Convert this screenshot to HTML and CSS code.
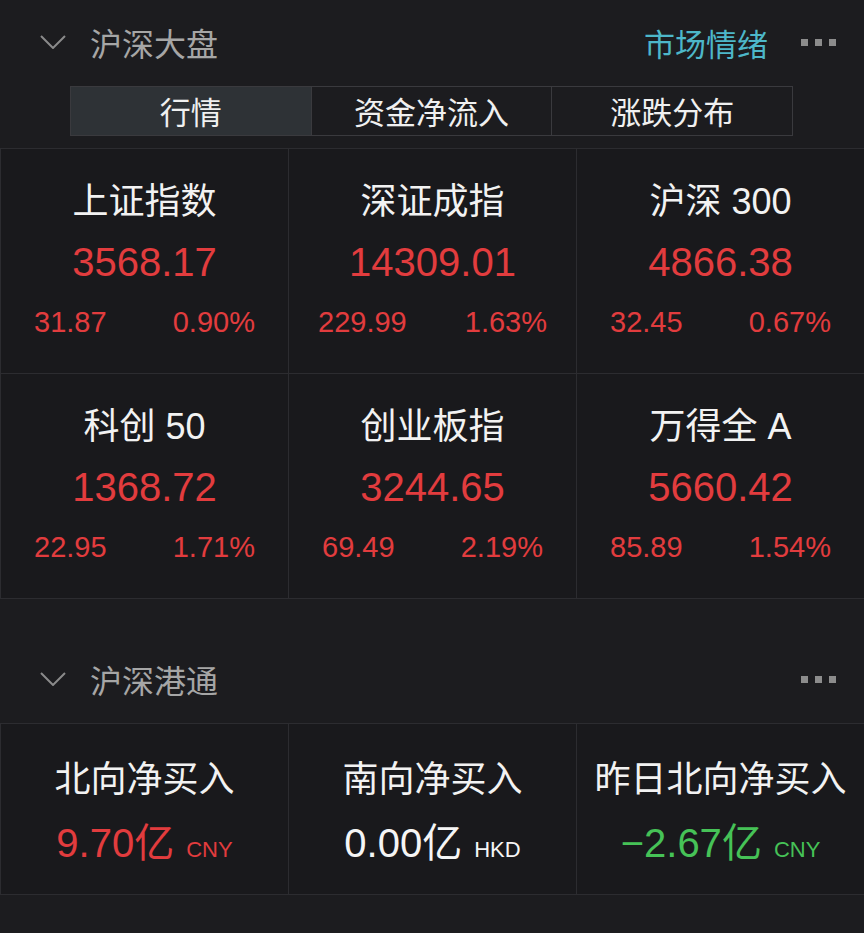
FILE: index.html
```html
<!DOCTYPE html>
<html lang="zh-CN">
<head>
  <meta charset="UTF-8" />
  <meta name="viewport" content="width=device-width, initial-scale=1.0"/>
  <title>沪深大盘</title>
  <link rel="stylesheet" href="styles.css">
</head>
<body>
  <!-- 沪深大盘 -->
  <div class="section-head first">
    <svg class="chevron" width="26" height="14" viewBox="0 0 26 14"><path d="M1 1 L13 13 L25 1" fill="none" stroke="#8a8a8a" stroke-width="2"/></svg>
    <span class="section-title">沪深大盘</span>
    <span class="mood">市场情绪</span>
    <span class="more"><i></i><i></i><i></i></span>
  </div>

  <div class="tabs">
    <div class="tab active">行情</div>
    <div class="tab">资金净流入</div>
    <div class="tab">涨跌分布</div>
  </div>

  <div class="grid index-grid">
    <div class="cell">
      <div class="name">上证指数</div>
      <div class="value up">3568.17</div>
      <div class="change up"><span>31.87</span><span>0.90%</span></div>
    </div>
    <div class="cell">
      <div class="name">深证成指</div>
      <div class="value up">14309.01</div>
      <div class="change up"><span>229.99</span><span>1.63%</span></div>
    </div>
    <div class="cell">
      <div class="name">沪深 300</div>
      <div class="value up">4866.38</div>
      <div class="change up"><span>32.45</span><span>0.67%</span></div>
    </div>
    <div class="cell">
      <div class="name">科创 50</div>
      <div class="value up">1368.72</div>
      <div class="change up"><span>22.95</span><span>1.71%</span></div>
    </div>
    <div class="cell">
      <div class="name">创业板指</div>
      <div class="value up">3244.65</div>
      <div class="change up"><span>69.49</span><span>2.19%</span></div>
    </div>
    <div class="cell">
      <div class="name">万得全 A</div>
      <div class="value up">5660.42</div>
      <div class="change up"><span>85.89</span><span>1.54%</span></div>
    </div>
  </div>

  <!-- 沪深港通 -->
  <div class="section-head second">
    <svg class="chevron" width="26" height="14" viewBox="0 0 26 14"><path d="M1 1 L13 13 L25 1" fill="none" stroke="#8a8a8a" stroke-width="2"/></svg>
    <span class="section-title">沪深港通</span>
    <span class="more"><i></i><i></i><i></i></span>
  </div>

  <div class="grid flow-grid">
    <div class="cell">
      <div class="name">北向净买入</div>
      <div class="value up">9.70<b>亿</b><small>CNY</small></div>
    </div>
    <div class="cell">
      <div class="name">南向净买入</div>
      <div class="value flat">0.00<b>亿</b><small>HKD</small></div>
    </div>
    <div class="cell">
      <div class="name">昨日北向净买入</div>
      <div class="value down">&minus;2.67<b>亿</b><small>CNY</small></div>
    </div>
  </div>
</body>
</html>
```

FILE: styles.css
```css
:root {
  --bg: #1c1c1f;
  --cell-bg: #19191c;
  --line: #2c2c30;
  --red: #e23c3e;
  --green: #46c257;
  --teal: #4db7c9;
}

body {
  margin: 0;
  background: var(--bg);
  color: #f2f2f2;
  font-family: "Liberation Sans", "Noto Sans CJK SC", sans-serif;
}

/* Section header */
.section-head {
  display: flex;
  align-items: center;
  height: 48px;
  padding: 0 28px 0 40px;
}

.section-head.first {
  padding-top: 18px;
}

.section-head.second {
  padding-top: 56px;
  padding-bottom: 20px;
}

.chevron {
  margin-right: 24px;
}

.section-title {
  font-family: "Noto Sans CJK SC", sans-serif;
  font-size: 32px;
  color: #a6a6a6;
}

.mood {
  margin-left: auto;
  font-family: "Noto Sans CJK SC", sans-serif;
  font-size: 31px;
  color: var(--teal);
}

.more {
  display: flex;
  gap: 7px;
  margin-left: 33px;
}

.section-head.second .more {
  margin-left: auto;
}

.more i {
  width: 7px;
  height: 7px;
  background: #8c8c8c;
}

/* Tabs */
.tabs {
  display: flex;
  margin: 20px 71px 12px 70px;
  border: 1px solid #3a3a3e;
}

.tab {
  flex: 1;
  height: 48px;
  line-height: 48px;
  text-align: center;
  font-family: "Noto Sans CJK SC", sans-serif;
  font-size: 31px;
  color: #f0f0f0;
}

.tab + .tab {
  border-left: 1px solid #3a3a3e;
}

.tab.active {
  background: #2e3236;
}

/* Cells */
.grid {
  display: grid;
  grid-template-columns: repeat(3, 1fr);
  gap: 1px;
  background: var(--line);
  border-top: 1px solid var(--line);
  border-bottom: 1px solid var(--line);
  padding: 0 0 0 1px;
}

.cell {
  background: var(--cell-bg);
  text-align: center;
}

.index-grid .cell {
  padding: 23px 0 21px;
}

.name {
  height: 60px;
  line-height: 60px;
  font-size: 36px;
  color: #f2f2f2;
}

.value {
  height: 60px;
  line-height: 60px;
  font-size: 40px;
}

.change {
  display: flex;
  justify-content: space-around;
  height: 60px;
  line-height: 60px;
  font-size: 29px;
}

.up { color: var(--red); }
.down { color: var(--green); }
.flat { color: #f5f5f5; }

.flow-grid .cell {
  padding: 26px 0 24px;
}

.value b {
  font-weight: normal;
  font-family: "Noto Sans CJK SC", sans-serif;
}

.value small {
  font-size: 22px;
  margin-left: 12px;
}
```
